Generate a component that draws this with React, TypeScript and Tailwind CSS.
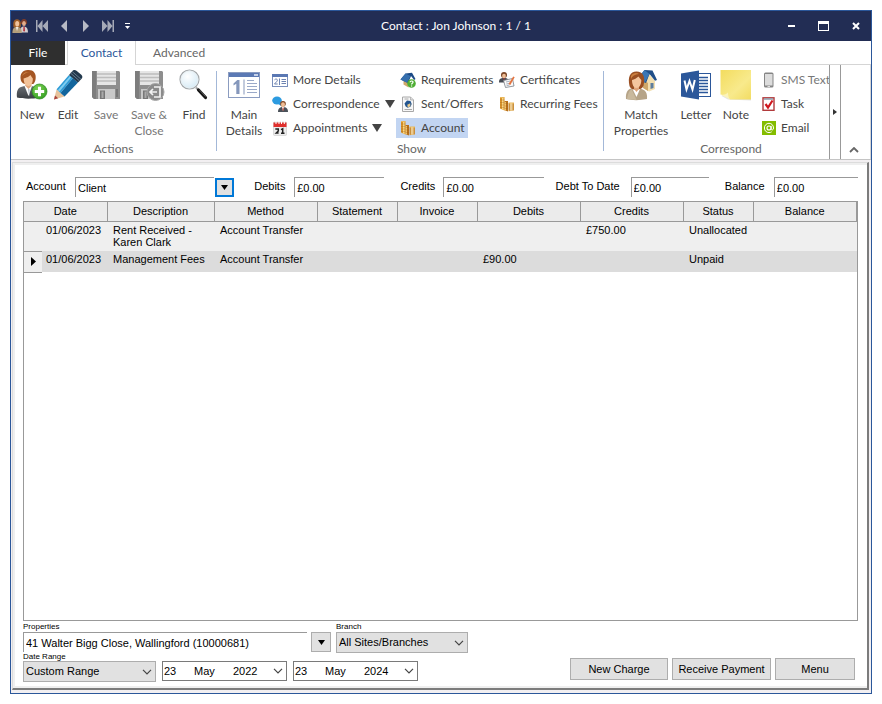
import React from 'react';

type IconProps = { className?: string };

function People({ className = 'size-4' }: IconProps) {
  return (
    <svg viewBox="0 0 16 16" className={className} aria-hidden="true">
      <path d="M9 6c-.5-3.500 1-5 3-5s3.500 1.500 3 5z" fill="#7a3b2a" />
      <ellipse cx="12" cy="5.500" rx="1.900" ry="2.500" fill="#e3ad8c" />
      <path d="M8 14.500c0-4.500 1.400-6 4-6s4 2 4 6z" fill="#d2cbcd" />
      <path d="M11.500 8.500h1.200l.3 4-.9 1.500-.9-1.500z" fill="#b5323c" />
      <path d="M1.600 9.500C.6 4 2 1.200 5 1.200S9.600 4 8.600 9.500z" fill="#a05f26" />
      <ellipse cx="5.200" cy="5.800" rx="2" ry="2.800" fill="#f0c49c" />
      <path d="M.4 15C.4 10.500 2 9 5 9s4.800 1.500 4.800 6z" fill="#b39f7c" />
      <path d="M3.800 9h2.600L5 13z" fill="#f4ece0" />
    </svg>
  );
}

function NewContact() {
  return (
    <svg viewBox="0 0 32 32" className="size-8" aria-hidden="true">
      <defs>
        <radialGradient id="plusGreen" cx=".4" cy=".3" r=".8">
          <stop offset="0" stopColor="#7fd355" />
          <stop offset="1" stopColor="#2f9a1f" />
        </radialGradient>
        <linearGradient id="suitGrey" x1="0" y1="0" x2="0" y2="1">
          <stop offset="0" stopColor="#6b7076" />
          <stop offset="1" stopColor="#3a3e43" />
        </linearGradient>
      </defs>
      <path d="M1 28.500c-.6-6 .6-9.500 4-10.500l5-1.500h4l5 1.500c3.500 1 4.500 4.500 4 10.500-6 1.600-15 1.600-22 0z" fill="url(#suitGrey)" />
      <path d="M8.500 17H16l-3.500 10z" fill="#fff" />
      <path d="M12.300 19.500l1.300 1-.3 7-1.300-7z" fill="#b9c4ce" />
      <path d="M9.500 13h6v4l-3 3-3-3z" fill="#e3a77c" />
      <path d="M4.800 11C3.500 4.500 7 .8 12 1c5-.4 8.600 3 7.600 9-.4 2.600-1.200 4-2.400 5l-9-.2C6.500 14 5.200 13 4.800 11z" fill="#a45522" />
      <path d="M7.600 9.500C9.500 9 13.500 7.500 14.500 6c.7 1.500 1.700 2.500 2.300 3.500.3 4-1.600 7.500-4.400 7.500S7.500 13.500 7.600 9.500z" fill="#f3c39a" />
      <path d="M6 7c1-3 4-4.500 7-4-3 .6-5 2-7 4z" fill="#cf8745" />
      <circle cx="23.500" cy="22.500" r="7.500" fill="url(#plusGreen)" stroke="#2a8a1d" strokeWidth=".7" />
      <path d="M22 17.800h3V21h3.200v3H25v3.200h-3V24h-3.200v-3H22z" fill="#fff" />
    </svg>
  );
}

function Pencil() {
  return (
    <svg viewBox="0 0 32 32" className="size-8" aria-hidden="true">
      <path d="M2 30.500l2.600-10.200 8 7.200z" fill="#e7c39c" />
      <path d="M2 30.500l1-4 3.200 2.700z" fill="#a9433c" />
      <path d="M4.600 20.300L17 6l4 3L8.500 24z" fill="#2d9bd6" />
      <path d="M8.500 24L21 9l5 4.500L12.600 27.500z" fill="#12659d" />
      <path d="M5.800 21.200L18 7l1.500 1L7.500 22.500z" fill="#7fcdf1" />
      <path d="M17 6l3-3.600c1.200-1.600 3-1.700 4.500-.6l4.800 4c1.300 1.200 1.500 2.600.3 4L26 13.500z" fill="#22384c" />
      <path d="M18.600 4.200l8.800 7.600M20.200 2.600l8.600 7.400" stroke="#6f8597" strokeWidth=".9" />
    </svg>
  );
}

function Floppy({ exit = false }: { exit?: boolean }) {
  return (
    <svg viewBox="0 0 32 32" className="size-8" aria-hidden="true">
      <path d="M2 2h27l1 1v27H4l-2-2z" fill="#8e8e8e" />
      <path d="M2 2h4v28H4l-2-2z" fill="#7d7d7d" />
      <path d="M7 2h19v14H7z" fill="#e6e6e6" />
      <path d="M7 5h19M7 8.500h19M7 12h19" stroke="#bdbdbd" strokeWidth="1.300" />
      <path d="M8 20h17v10H8z" fill="#c9c9c9" />
      <path d="M10 21.500h5V30h-5z" fill="#777" />
      <path d="M11.500 22.500h2V29h-2z" fill="#aaa" />
      <path d="M26 20h2v8h-2z" fill="#777" />
      {exit && (
        <g>
          <circle cx="22.500" cy="23" r="8.500" fill="#8b8b8b" stroke="#a8a8a8" strokeWidth="1" />
          <path d="M21 18h6v10h-6" fill="none" stroke="#f2f2f2" strokeWidth="1.700" />
          <path d="M24 23h-7m3-3l-3 3 3 3" fill="none" stroke="#f2f2f2" strokeWidth="1.700" />
        </g>
      )}
    </svg>
  );
}

function Magnifier() {
  return (
    <svg viewBox="0 0 32 32" className="size-8" aria-hidden="true">
      <defs>
        <radialGradient id="glass" cx=".4" cy=".35" r=".7">
          <stop offset="0" stopColor="#ffffff" />
          <stop offset="1" stopColor="#d3e9f5" />
        </radialGradient>
      </defs>
      <path d="M18 18.500l4 4" stroke="#a0a0a0" strokeWidth="2" />
      <path d="M20.500 21l7 7.500" stroke="#161616" strokeWidth="3.200" strokeLinecap="round" />
      <path d="M21 20.500l6.500 7" stroke="#6a6a6a" strokeWidth=".8" />
      <circle cx="11.500" cy="10.500" r="9.500" fill="url(#glass)" stroke="#a4a8ab" strokeWidth="1.200" />
      <circle cx="11.500" cy="10.500" r="8.500" fill="none" stroke="#e8edf0" strokeWidth=".8" />
    </svg>
  );
}

function MainDetailsIcon() {
  return (
    <svg viewBox="0 0 32 26" className="h-[26px] w-8" aria-hidden="true">
      <rect x=".5" y=".5" width="31" height="25" fill="#fff" stroke="#8b9cc0" />
      <rect x="1" y="1" width="30" height="4" fill="#5b79b4" />
      <rect x="26" y="2" width="4" height="2" fill="#c5d1e8" />
      <path d="M5.500 11.500L9.300 8h2.200v14H8.300V11.800L5.500 13.500z" fill="#8597bb" />
      <path d="M16 7.500v15" stroke="#8597bb" />
      <path d="M19 8.500h7M19 11.500h10M19 14.500h10M19 17.500h10M19 20.500h10" stroke="#9aa9c8" />
    </svg>
  );
}

function MoreDetailsIcon() {
  return (
    <svg viewBox="0 0 16 13" className="h-[13px] w-4" aria-hidden="true">
      <rect x=".5" y=".5" width="15" height="12" fill="#fff" stroke="#7a8fbb" />
      <rect x="0" y="0" width="16" height="3" fill="#5a78b3" />
      <path d="M2.500 5.800c1-1.200 3-.9 2.900.5C5.300 7.500 3.500 8.500 2.500 10h3.200" fill="none" stroke="#6d83b1" />
      <path d="M7.500 4.500v6.500M9.500 5.500h4.500M9.500 7.500h4.500M9.500 9.500h4.500" stroke="#6d83b1" />
    </svg>
  );
}

function CorrespondenceIcon() {
  return (
    <svg viewBox="0 0 16 16" className="size-4" aria-hidden="true">
      <ellipse cx="5" cy="4.500" rx="4.800" ry="4" fill="#2c9be0" />
      <path d="M5 7l4 3-.5-4z" fill="#2c9be0" />
      <path d="M6 16c0-3.500 1.600-5 5-5s5 1.500 5 5z" fill="#4b5159" />
      <path d="M9.800 11h2.600L11 15z" fill="#fff" />
      <circle cx="11" cy="7.800" r="2.800" fill="#7f431f" />
      <ellipse cx="11" cy="8.700" rx="2" ry="2.400" fill="#efbd95" />
      <path d="M10.700 11.500h.8l.2 2.500-.6 1-.6-1z" fill="#c0392b" />
    </svg>
  );
}

function CalendarIcon() {
  return (
    <svg viewBox="0 0 16 16" className="size-4" aria-hidden="true">
      <rect x="1.500" y="2" width="13" height="13.500" rx="1" fill="#ececec" stroke="#c9c9c9" strokeWidth=".6" />
      <path d="M1.500 2.500h13V7h-13z" fill="#e0302e" />
      <path d="M4 1v3M7 1v3M9.500 1v3M12.300 1v3" stroke="#fff" />
      <path d="M3.300 9h3v2l-2 2h2.300M9 9.600l1.700-.8V13.500M9 13.300h3.500" fill="none" stroke="#222" strokeWidth="1.500" />
    </svg>
  );
}

function RequirementsIcon() {
  return (
    <svg viewBox="0 0 16 16" className="size-4" aria-hidden="true">
      <path d="M3.500 7l5 4v4.500l-5-3z" fill="#cfa86a" />
      <path d="M8.500 11L14 7v5.500l-5.500 3z" fill="#f1dfb4" />
      <path d="M.5 7.500L5.500 1.500 12 .8 15.500 7l-1.300 1L11 4 8 11z" fill="#1b4a86" />
      <path d="M.5 7.500L5.500 1.500 10.500 4 7 10.800z" fill="#356fae" />
      <circle cx="11.500" cy="11.500" r="4.300" fill="#4fae35" />
      <path d="M10 10.300c.2-1.800 3.200-1.700 3 0-.1 1-1.400 1-1.400 2.200m0 1v1" fill="none" stroke="#fff" strokeWidth="1.200" />
    </svg>
  );
}

function OffersIcon() {
  return (
    <svg viewBox="0 0 16 16" className="size-4" aria-hidden="true">
      <path d="M2.500 1h8l3 3v11.500h-11z" fill="#f7f7f7" stroke="#a8a8a8" />
      <path d="M10.500 1v3h3" fill="#ddd" stroke="#a8a8a8" strokeWidth=".7" />
      <path d="M4.500 7.500L7 4.500l3.500.5 1.200 3-1.200 2.800-3 1-2-1.500z" fill="#23558f" />
      <path d="M7.300 8.800l3-1.600v3l-2.500 1.300z" fill="#e9c886" />
      <path d="M4.500 13.500h7.500M4.500 3h4" stroke="#aaa" />
    </svg>
  );
}

function CoinsIcon() {
  return (
    <svg viewBox="0 0 16 16" className="size-4" aria-hidden="true">
      <path d="M1 1.500h4.500v13L1 12.500z" fill="#d9942c" />
      <path d="M3 1.500h1.500v12.500L3 13.500z" fill="#f8d988" />
      <path d="M5.500 5H9v10.500l-3.500-1.300z" fill="#b8701a" />
      <path d="M5.500 6H7v8.500l-1.500-.3z" fill="#f3c66a" />
      <path d="M9.500 7H15v7.500l-5.500.7z" fill="#d39a45" />
      <path d="M11 7h2.500v7.500H11z" fill="#f9e0a8" />
      <path d="M1 4h4.500M1 6.500h4.500M1 9h4.500M1 11.500h4.500M5.500 7.500H9M5.500 10H9M5.500 12.500H9M9.500 9H15M9.500 11H15M9.500 13H15" stroke="#9b5c17" strokeOpacity=".6" strokeWidth=".5" />
      <path d="M1 1.500h4.500M9.500 7H15" stroke="#e9b75b" strokeWidth="1" />
    </svg>
  );
}

function CertificateIcon() {
  return (
    <svg viewBox="0 0 16 16" className="size-4" aria-hidden="true">
      <path d="M0 10.500C0 7 1.200 6 5 6s4.500 1 4.500 4.500z" fill="#454a52" />
      <circle cx="5" cy="3" r="3" fill="#7b4526" />
      <ellipse cx="5" cy="4" rx="1.900" ry="2.300" fill="#efbd95" />
      <path d="M4.400 6.200h1.200L5 9z" fill="#c33" />
      <path d="M4.500 8.500l9-2 1.500 7.500L6.500 15.500z" fill="#fafafa" stroke="#7a7f86" strokeWidth=".8" />
      <path d="M7 10l4-.9M7.300 12l3-.6M7.600 13.600l3-.6" stroke="#93a0b0" strokeWidth=".8" />
      <path d="M9.500 12l4.700-7.500 1.500.8L11.300 13z" fill="#e37440" />
    </svg>
  );
}

function MatchIcon() {
  return (
    <svg viewBox="0 0 32 32" className="size-8" aria-hidden="true">
      <path d="M18 11l6-6 6 7v8l-6 2.500-6-4z" fill="#f2dfb0" />
      <path d="M18 11l5 3v8l-5-3z" fill="#cfa86a" />
      <path d="M25.500 14h3v5l-3 1z" fill="#5d7d9d" />
      <path d="M14 8l5.500-7 8 .5L32 11l-2 .7L24.500 5 21 14l-5-2z" fill="#1f4e88" />
      <path d="M14 8l5.500-7 5 4L20 13.500z" fill="#3a76b5" />
      <path d="M1 30c-.6-6 1.500-10 5.500-10.500l9 .3c5 1 7 4 6.500 10.200-7 1.500-15 1.500-21 0z" fill="#b6a488" />
      <path d="M7.500 20H15l-3.500 8z" fill="#fff" />
      <path d="M2 30c1-4 1-7 4.500-10l5 11z" fill="#c9b99d" />
      <path d="M4.500 17C2.500 8 5 2.500 11.500 2.500s9 5 7 14c-1 3-3.500 4-7 4s-6-.5-7-3.500z" fill="#9a4f22" />
      <path d="M6 7c2-3.500 6-3.500 8-2-4 .2-7 2-8 5z" fill="#cc8140" />
      <path d="M9 15h5v5l-2.500 3L9 20z" fill="#dfa478" />
      <path d="M7 11c2-.5 5-2 6.500-3.500 1 1.500 2 2.500 2.800 3.500 0 4.500-2 8-4.800 8S7 15.500 7 11z" fill="#f4c69e" />
    </svg>
  );
}

function WordIcon() {
  return (
    <svg viewBox="0 0 32 32" className="size-8" aria-hidden="true">
      <rect x="16" y="4.500" width="14.500" height="23" fill="#fff" stroke="#2b579a" />
      <path d="M18 8.500h10M18 11.500h10M18 14.500h10M18 17.500h10M18 20.500h10M18 23.500h10" stroke="#2b579a" strokeWidth="1.300" />
      <path d="M1 4.500L19 1.500v29L1 27.500z" fill="#2b579a" />
      <path d="M4.500 11.500l2 9 3-8.500 3 8.500 2.300-9.500" fill="none" stroke="#fff" strokeWidth="2" />
    </svg>
  );
}

function NoteIcon() {
  return (
    <svg viewBox="0 0 32 32" className="size-8" aria-hidden="true">
      <defs>
        <linearGradient id="sticky" x1="0" y1="0" x2="1" y2="1">
          <stop offset="0" stopColor="#f3dc5e" />
          <stop offset=".6" stopColor="#f8ea8c" />
          <stop offset="1" stopColor="#f2dc62" />
        </linearGradient>
      </defs>
      <path d="M1.500 27L8 30.500l23 1V3z" fill="#e4e4e4" />
      <path d="M.5 1h30.500v29.500H10C8 28 4 26.500.5 25.500z" fill="url(#sticky)" />
      <path d="M.5 25.500C4 26.500 7 25 8 23.500c0 2.500.5 5 2 7C7 29 3 27 .5 25.500z" fill="#fbf3ba" />
    </svg>
  );
}

function PhoneIcon() {
  return (
    <svg viewBox="0 0 14 16" className="h-4 w-[14px]" aria-hidden="true">
      <rect x="2" y=".5" width="9.500" height="15" rx="1.500" fill="#858585" />
      <rect x="3" y="2" width="7.500" height="11.500" fill="#dcdcdc" />
      <path d="M5.500 14.500h2.500" stroke="#ddd" />
    </svg>
  );
}

function TaskIcon() {
  return (
    <svg viewBox="0 0 14 16" className="h-4 w-[14px]" aria-hidden="true">
      <rect x="1" y="1.800" width="11" height="12.500" fill="#fff" stroke="#b13a3c" strokeWidth="1.400" />
      <path d="M2 3h9" stroke="#8d9aaa" strokeWidth="1.500" />
      <path d="M3.500 8l2.500 3.500L10.500 4.500" fill="none" stroke="#d0181f" strokeWidth="2.200" />
    </svg>
  );
}

function EmailIcon() {
  return (
    <svg viewBox="0 0 14 14" className="size-[14px]" aria-hidden="true">
      <rect width="14" height="14" fill="#84bd00" />
      <circle cx="7" cy="7" r="2" fill="none" stroke="#fff" strokeWidth="1.100" />
      <path d="M9.200 4.800v3.500c.3 1.300 2.300.9 2.300-1.300 0-2.800-2-4.700-4.500-4.700A4.600 4.600 0 0 0 2.400 7c0 2.700 2 4.600 4.600 4.600 1 0 2-.3 2.700-.8" fill="none" stroke="#fff" strokeWidth="1" />
    </svg>
  );
}

function DownTriangle({ className = 'h-[5px] w-[7px]' }: IconProps) {
  return (
    <svg viewBox="0 0 10 8" preserveAspectRatio="none" className={className} aria-hidden="true">
      <path d="M0 0h10L5 8z" fill="currentColor" />
    </svg>
  );
}

function Chevron() {
  return (
    <svg viewBox="0 0 10 6" className="h-[6px] w-[10px]" aria-hidden="true">
      <path d="M1 .8l4 4 4-4" fill="none" stroke="#444" strokeWidth="1.200" />
    </svg>
  );
}

function NavIcon({ kind }: { kind: 'first' | 'prev' | 'next' | 'last' }) {
  const flip = kind === 'next' || kind === 'last';
  const single = kind === 'prev' || kind === 'next';
  return (
    <svg viewBox="0 0 12 12" className={flip ? 'size-3 rotate-180' : 'size-3'} aria-hidden="true">
      {single ? (
        <path d="M9 0v12L3 6z" fill="#b7bac4" />
      ) : (
        <path d="M0 0h1.500v12H0zM6.500 0v12L1.500 6zM12 0v12L6.500 6z" fill="#a6aab7" />
      )}
    </svg>
  );
}

function BigButton({ icon, lines, width, muted = false }: { icon: React.ReactNode; lines: string[]; width: string; muted?: boolean }) {
  return (
    <button type="button" className={`flex shrink-0 flex-col items-center pt-1 ${width} ${muted ? 'text-[#777]' : 'text-[#444]'}`}>
      <span className="mb-[6px] flex h-8 items-center">{icon}</span>
      {lines.map((line) => (
        <span key={line} className="leading-4 whitespace-nowrap">{line}</span>
      ))}
    </button>
  );
}

function SmallButton({ icon, label, menu = false, active = false, muted = false }: { icon: React.ReactNode; label: string; menu?: boolean; active?: boolean; muted?: boolean }) {
  return (
    <div className="flex h-6 items-center">
      <button
        type="button"
        className={`flex h-5 items-center gap-[5px] pr-[3px] pl-1 whitespace-nowrap ${active ? 'bg-[#c2d5f2]' : ''} ${muted ? 'text-[#777]' : 'text-[#444]'}`}
      >
        {icon}
        {label}
        {menu && <DownTriangle className="h-2 w-[10px]" />}
      </button>
    </div>
  );
}

function RibbonGroup({ label, className, children }: { label: string; className: string; children: React.ReactNode }) {
  return (
    <section aria-label={label} className={`flex shrink-0 flex-col ${className}`}>
      <div className="flex h-[74px] items-start">{children}</div>
      <div className="text-center leading-5 text-[#666]">{label}</div>
    </section>
  );
}

function Separator() {
  return <div className="mt-[6px] h-20 w-px shrink-0 bg-[#a3b8d8]" />;
}

function Field({ id, label, value, labelWidth, className }: { id: string; label: string; value: string; labelWidth: string; className: string }) {
  return (
    <div className={`flex min-w-0 grow items-start ${className}`}>
      <label htmlFor={id} className={`shrink-0 leading-[18px] whitespace-nowrap ${labelWidth}`}>{label}</label>
      <input id={id} readOnly defaultValue={value} className="h-5 w-0 min-w-0 grow border-t border-l border-[#999] bg-white pl-[2px] outline-none" />
    </div>
  );
}

function Select({ id, options, className }: { id: string; options: string[]; className: string }) {
  return (
    <div className={`grid items-center ${className}`}>
      <select id={id} className="col-start-1 row-start-1 h-[21px] w-full appearance-none border border-[#adadad] bg-[#e1e1e1] pl-[2px] outline-none">
        {options.map((option) => (
          <option key={option}>{option}</option>
        ))}
      </select>
      <span className="pointer-events-none col-start-1 row-start-1 mr-1 justify-self-end">
        <Chevron />
      </span>
    </div>
  );
}

function DatePicker({ name, day, month, year }: { name: string; day: string; month: string; year: string }) {
  return (
    <div role="group" aria-label={name} className="flex h-5 w-[125px] items-center border border-[#7a7a7a] bg-white pr-[3px] pl-px">
      <input aria-label={`${name} day`} defaultValue={day} className="w-[30px] outline-none" />
      <input aria-label={`${name} month`} defaultValue={month} className="w-[39px] outline-none" />
      <input aria-label={`${name} year`} defaultValue={year} className="w-0 grow outline-none" />
      <button type="button" aria-label={`Open ${name} calendar`}>
        <Chevron />
      </button>
    </div>
  );
}

function PushButton({ label, width }: { label: string; width: string }) {
  return (
    <button type="button" className={`h-[22px] border border-[#adadad] bg-[#e1e1e1] whitespace-nowrap ${width}`}>
      {label}
    </button>
  );
}

const columns = [
  { name: 'Description', width: 'w-[107px]' },
  { name: 'Method', width: 'w-[103px]' },
  { name: 'Statement', width: 'w-[80px]' },
  { name: 'Invoice', width: 'w-[80px]' },
  { name: 'Debits', width: 'w-[103px]' },
  { name: 'Credits', width: 'w-[103px]' },
  { name: 'Status', width: 'w-[70px]' },
  { name: 'Balance', width: '' },
];

const entries = [
  { current: false, cells: ['01/06/2023', 'Rent Received - Karen Clark', 'Account Transfer', '', '', '', '£750.00', 'Unallocated', ''] },
  { current: true, cells: ['01/06/2023', 'Management Fees', 'Account Transfer', '', '', '£90.00', '', 'Unpaid', ''] },
];

function TitleBar() {
  return (
    <header className="flex h-[30px] shrink-0 items-center bg-[#222d54] text-white">
      <div className="flex w-[122px] shrink-0 items-center pl-px">
        <People />
        <button type="button" aria-label="First record" className="ml-2"><NavIcon kind="first" /></button>
        <button type="button" aria-label="Previous record" className="ml-[10px]"><NavIcon kind="prev" /></button>
        <button type="button" aria-label="Next record" className="ml-[10px]"><NavIcon kind="next" /></button>
        <button type="button" aria-label="Last record" className="ml-[10px]"><NavIcon kind="last" /></button>
        <button type="button" aria-label="Customise toolbar" className="ml-[11px] flex flex-col items-center gap-[2px]">
          <span className="h-px w-[5px] bg-white" />
          <DownTriangle className="h-[3px] w-[5px]" />
        </button>
      </div>
      <h1 className="grow text-center text-[12px]">Contact : Jon Johnson : 1 / 1</h1>
      <div className="flex w-[92px] shrink-0 items-center justify-between pr-[11px] pl-[9px]">
        <button type="button" aria-label="Minimise"><span className="block h-[2px] w-[7px] bg-white" /></button>
        <button type="button" aria-label="Maximise"><span className="block h-[10px] w-[11px] border border-t-[3px] border-white" /></button>
        <button type="button" aria-label="Close">
          <svg viewBox="0 0 8 8" className="size-2" aria-hidden="true">
            <path d="M1 1l6 6M7 1L1 7" stroke="#fff" strokeWidth="2" />
          </svg>
        </button>
      </div>
    </header>
  );
}

function Tabs() {
  return (
    <nav className="flex h-6 shrink-0 text-[12px] text-[#666]">
      <button type="button" className="w-[54px] bg-[#2f2f2f] text-white">File</button>
      <span className="w-[2px] border-b border-[#d5d5d5]" />
      <button type="button" className="w-[69px] border-x border-[#d5d5d5] text-[#2b579a]">Contact</button>
      <div className="flex grow border-b border-[#d5d5d5]">
        <button type="button" className="px-[17px]">Advanced</button>
      </div>
    </nav>
  );
}

function Ribbon() {
  return (
    <div className="flex h-[95px] shrink-0 border-b border-[#c4c4c4] text-[12px]">
      <RibbonGroup label="Actions" className="w-[205px] px-[3px]">
        <BigButton icon={<NewContact />} lines={['New']} width="w-9" />
        <BigButton icon={<Pencil />} lines={['Edit']} width="w-9" />
        <BigButton icon={<Floppy />} lines={['Save']} width="w-10" muted />
        <BigButton icon={<Floppy exit />} lines={['Save &', 'Close']} width="w-[46px]" muted />
        <BigButton icon={<Magnifier />} lines={['Find']} width="w-[44px]" />
      </RibbonGroup>
      <Separator />
      <RibbonGroup label="Show" className="w-[386px] pl-[3px]">
        <BigButton icon={<MainDetailsIcon />} lines={['Main', 'Details']} width="w-12" />
        <div className="flex w-32 flex-col pt-[3px]">
          <SmallButton icon={<MoreDetailsIcon />} label="More Details" />
          <SmallButton icon={<CorrespondenceIcon />} label="Correspondence" menu />
          <SmallButton icon={<CalendarIcon />} label="Appointments" menu />
        </div>
        <div className="flex w-[99px] flex-col pt-[3px]">
          <SmallButton icon={<RequirementsIcon />} label="Requirements" />
          <SmallButton icon={<OffersIcon />} label="Sent/Offers" />
          <SmallButton icon={<CoinsIcon />} label="Account" active />
        </div>
        <div className="flex flex-col pt-[3px]">
          <SmallButton icon={<CertificateIcon />} label="Certificates" />
          <SmallButton icon={<CoinsIcon />} label="Recurring Fees" />
        </div>
      </RibbonGroup>
      <Separator />
      <div className="flex w-0 grow overflow-hidden">
        <RibbonGroup label="Correspond" className="w-[254px]">
          <BigButton icon={<MatchIcon />} lines={['Match', 'Properties']} width="w-[74px]" />
          <BigButton icon={<WordIcon />} lines={['Letter']} width="w-9" />
          <BigButton icon={<NoteIcon />} lines={['Note']} width="w-[44px]" />
          <div className="flex flex-col pt-[3px]">
            <SmallButton icon={<PhoneIcon />} label="SMS Text" muted />
            <SmallButton icon={<TaskIcon />} label="Task" />
            <SmallButton icon={<EmailIcon />} label="Email" />
          </div>
        </RibbonGroup>
      </div>
      <button type="button" aria-label="Scroll ribbon" className="flex w-3 shrink-0 items-center justify-center border-x border-[#999]">
        <svg viewBox="0 0 4 6" className="h-[6px] w-1" aria-hidden="true"><path d="M0 0l4 3-4 3z" fill="#333" /></svg>
      </button>
      <div className="flex w-[30px] shrink-0 items-end justify-center border-r border-[#d5d5d5] pr-[3px] pb-[6px]">
        <button type="button" aria-label="Collapse ribbon">
          <svg viewBox="0 0 10 6" className="h-[6px] w-[10px]" aria-hidden="true">
            <path d="M1 5l4-4 4 4" fill="none" stroke="#666" strokeWidth="1.800" />
          </svg>
        </button>
      </div>
    </div>
  );
}

function Summary() {
  return (
    <div className="flex h-6 items-start gap-3 pl-[3px]">
      <div className="mr-2 flex min-w-0 grow basis-[208px] items-start">
        <label htmlFor="account" className="w-[49px] shrink-0 leading-[18px]">Account</label>
        <input id="account" defaultValue="Client" className="h-5 w-0 min-w-0 grow border-t border-l border-[#999] pl-[2px] outline-none" />
        <button type="button" aria-label="Choose account" className="mt-px ml-px flex h-[19px] w-[19px] shrink-0 items-center justify-center border-2 border-[#0078d7] bg-[#e1e1e1] text-black">
          <DownTriangle />
        </button>
      </div>
      <Field id="debits" label="Debits" value="£0.00" labelWidth="w-10" className="mr-1 basis-[130px]" />
      <Field id="credits" label="Credits" value="£0.00" labelWidth="w-[43px]" className="basis-[143px]" />
      <Field id="debt" label="Debt To Date" value="£0.00" labelWidth="w-[75px]" className="mr-1 basis-[153px]" />
      <Field id="balance" label="Balance" value="£0.00" labelWidth="w-[49px]" className="basis-[133px]" />
    </div>
  );
}

function Ledger() {
  return (
    <div className="grow border border-[#999] bg-white">
      <table className="w-full table-fixed border-collapse text-left">
        <colgroup>
          <col className="w-[18px]" />
          <col className="w-[65px]" />
          {columns.map((column) => (
            <col key={column.name} className={column.width} />
          ))}
        </colgroup>
        <thead>
          <tr className="h-[19px] border-b border-[#999] bg-[#ebebeb]">
            <th colSpan={2} className="border-r border-[#999] p-0 text-center font-normal">Date</th>
            {columns.map((column) => (
              <th key={column.name} className="border-r border-[#999] p-0 text-center font-normal">{column.name}</th>
            ))}
          </tr>
        </thead>
        <tbody>
          {entries.map((entry, index) => (
            <tr key={index} className={entry.current ? 'h-[21px] bg-[#dcdcdc]' : 'h-[30px] bg-[#efefef]'}>
              <th scope="row" aria-label={entry.current ? 'Current record' : 'Record'} className="border-b border-[#999] bg-[#efefef] p-0">
                {entry.current && (
                  <svg viewBox="0 0 5 9" className="ml-[7px] h-[9px] w-[5px]" aria-hidden="true">
                    <path d="M0 0l5 4.500L0 9z" fill="#000" />
                  </svg>
                )}
              </th>
              {entry.cells.map((cell, cellIndex) => (
                <td key={cellIndex} className={`pt-[2px] pb-0 align-top leading-3 ${cellIndex === 0 ? 'pr-0 pl-1' : 'pr-2 pl-[6px]'}`}>{cell}</td>
              ))}
            </tr>
          ))}
        </tbody>
      </table>
    </div>
  );
}

function Footer() {
  return (
    <footer className="flex shrink-0 items-end justify-between">
      <div className="flex flex-col">
        <div className="flex items-end">
          <div className="flex flex-col">
            <label htmlFor="property" className="text-[8px] leading-[11px]">Properties</label>
            <div className="flex h-[21px] gap-1">
              <input id="property" defaultValue="41 Walter Bigg Close, Wallingford (10000681)" className="h-5 w-[284px] border-t border-l border-[#999] pl-[2px] outline-none" />
              <button type="button" aria-label="Choose property" className="flex h-5 w-5 items-center justify-center border border-[#adadad] bg-[#e1e1e1]">
                <DownTriangle />
              </button>
            </div>
          </div>
          <div className="ml-[5px] flex flex-col">
            <label htmlFor="branch" className="text-[8px] leading-[11px]">Branch</label>
            <Select id="branch" options={['All Sites/Branches']} className="w-[132px]" />
          </div>
        </div>
        <label htmlFor="range" className="text-[8px] leading-2">Date Range</label>
        <div className="flex items-start gap-[6px]">
          <Select id="range" options={['Custom Range']} className="w-[133px]" />
          <DatePicker name="From" day="23" month="May" year="2022" />
          <DatePicker name="To" day="23" month="May" year="2024" />
        </div>
      </div>
      <div className="flex gap-1 pr-[3px] pb-[2px]">
        <PushButton label="New Charge" width="w-[98px]" />
        <PushButton label="Receive Payment" width="w-[99px]" />
        <PushButton label="Menu" width="w-20" />
      </div>
    </footer>
  );
}

export default function App() {
  return (
    <div className="flex min-h-screen bg-white p-[10px] font-['Lato','Open_Sans',sans-serif] text-[#444]">
      <div className="flex min-w-0 grow flex-col border border-[#2b579a] bg-white">
        <TitleBar />
        <Tabs />
        <Ribbon />
        <div className="flex grow flex-col bg-[#f2eff1] pt-[2px] pr-[2px] pb-[3px] pl-px">
          <div className="flex grow flex-col border-t border-r-2 border-b-2 border-l border-t-[#dcdcdc] border-r-[#7c7c7c] border-b-[#7c7c7c] border-l-[#dcdcdc] bg-[#efefef] pt-[2px] pb-[2px] pl-[2px]">
            <main className="flex grow flex-col bg-white pt-3 pr-[9px] pb-1 pl-2 font-['Liberation_Sans',Arial,sans-serif] text-[11px] text-black">
              <Summary />
              <Ledger />
              <Footer />
            </main>
          </div>
        </div>
      </div>
    </div>
  );
}
